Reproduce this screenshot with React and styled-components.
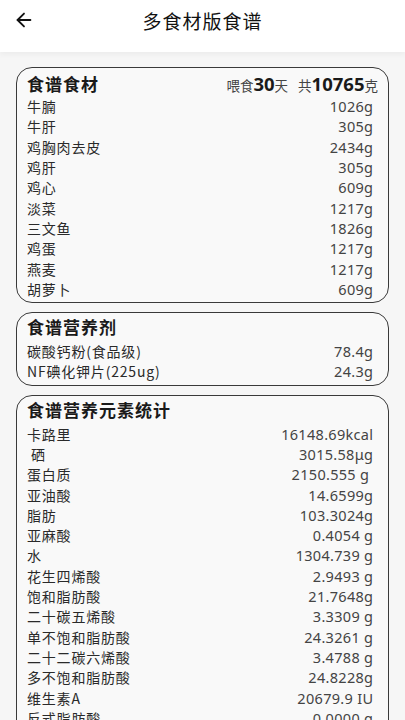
import React from 'react'
import styled, { createGlobalStyle } from 'styled-components'
import { ArrowLeft } from 'lucide-react'

const GlobalStyle = createGlobalStyle`
  html, body {
    margin: 0;
    padding: 0;
    background: #f6f6f6;
    font-family: "Noto Sans CJK SC", "Noto Sans", "Liberation Sans", sans-serif;
  }
`

const ingredients = [
  ['牛腩', '1026g'],
  ['牛肝', '305g'],
  ['鸡胸肉去皮', '2434g'],
  ['鸡肝', '305g'],
  ['鸡心', '609g'],
  ['淡菜', '1217g'],
  ['三文鱼', '1826g'],
  ['鸡蛋', '1217g'],
  ['燕麦', '1217g'],
  ['胡萝卜', '609g'],
]

const supplements = [
  ['碳酸钙粉(食品级)', '78.4g'],
  ['NF碘化钾片(225ug)', '24.3g'],
]

const nutrients = [
  ['卡路里', '16148.69kcal'],
  [' 硒', '3015.58μg'],
  ['蛋白质', '2150.555 g '],
  ['亚油酸', '14.6599g'],
  ['脂肪', '103.3024g'],
  ['亚麻酸', '0.4054 g'],
  ['水', '1304.739 g'],
  ['花生四烯酸', '2.9493 g'],
  ['饱和脂肪酸', '21.7648g'],
  ['二十碳五烯酸', '3.3309 g'],
  ['单不饱和脂肪酸', '24.3261 g'],
  ['二十二碳六烯酸', '3.4788 g'],
  ['多不饱和脂肪酸', '24.8228g'],
  ['维生素A', '20679.9 IU'],
  ['反式脂肪酸', '0.0000 g'],
  ['胆固醇', '7421.35mg'],
  ['碳水化合物', '1207.84g'],
]

export default function App() {
  return (
    <>
      <GlobalStyle />
      <Page>
        <TopBar>
          <BackButton><ArrowLeft size={22} strokeWidth={2} /></BackButton>
          <PageTitle>多食材版食谱</PageTitle>
        </TopBar>
        <Content>
          <Card>
            <CardHead $tall>
              <CardTitle>食谱食材</CardTitle>
              <Summary>
                <Small>喂食</Small><Big>30</Big><Small>天</Small>
                <Spacer />
                <Small>共</Small><Big>10765</Big><Small>克</Small>
              </Summary>
            </CardHead>
            {ingredients.map(([name, val]) => (
              <Row key={name}><Name>{name}</Name><Value>{val}</Value></Row>
            ))}
          </Card>

          <Card>
            <CardHead>
              <CardTitle>食谱营养剂</CardTitle>
            </CardHead>
            {supplements.map(([name, val]) => (
              <Row key={name}><Name>{name}</Name><Value>{val}</Value></Row>
            ))}
          </Card>

          <Card>
            <CardHead>
              <CardTitle>食谱营养元素统计</CardTitle>
            </CardHead>
            {nutrients.map(([name, val]) => (
              <Row key={name}><Name>{name}</Name><Value>{val}</Value></Row>
            ))}
          </Card>
        </Content>
      </Page>
    </>
  )
}

let Page = styled.div`
  width: 405px;
  min-height: 720px;
  background: #f6f6f6;
`

let TopBar = styled.header`
  position: relative;
  height: 52px;
  background: #fff;
  display: flex;
  align-items: center;
  justify-content: center;
  box-shadow: 0 3px 5px rgba(0, 0, 0, 0.04);
`

let BackButton = styled.div`
  position: absolute;
  left: 13px;
  top: 9px;
  color: #111;
  display: flex;
`

let PageTitle = styled.h1`
  margin: 0;
  margin-top: -12px;
  font-size: 19px;
  font-weight: 400;
  color: #111;
  letter-spacing: 1px;
`

let Content = styled.main`
  padding: 15px 16px 0;
  display: flex;
  flex-direction: column;
  gap: 9px;
`

let Card = styled.section`
  background: #f9f9f9;
  border: 1.5px solid #3a3a3a;
  border-radius: 16px;
  padding: 2px 15px 3.5px 10px;
`

let CardHead = styled.div`
  display: flex;
  align-items: center;
  justify-content: space-between;
  height: ${p => (p.$tall ? '26px' : '22px')};
  margin-bottom: ${p => (p.$tall ? '0' : '3.5px')};
`

let CardTitle = styled.h2`
  margin: 0;
  font-size: 17px;
  letter-spacing: 1px;
  font-weight: 700;
  color: #1a1a1a;
`

let Summary = styled.div`
  display: flex;
  align-items: baseline;
  margin-right: -5px;
  color: #444;
`

let Small = styled.span`
  font-size: 13.5px;
`

let Big = styled.span`
  font-size: 18.5px;
  font-weight: 700;
  font-family: "Noto Sans", "Liberation Sans", sans-serif;
  color: #1a1a1a;
`

let Spacer = styled.span`
  width: 10px;
`

let Row = styled.div`
  display: flex;
  justify-content: space-between;
  align-items: center;
  height: 20.3px;
  font-size: 14px;
  letter-spacing: 0.8px;
  color: #2a2a2a;
`

let Name = styled.span`
  white-space: pre;
`

let Value = styled.span`
  white-space: pre;
  color: #444;
  letter-spacing: 0.3px;
  font-size: 14.5px;
  margin-right: -0.3px;
  font-family: "Noto Sans", "Liberation Sans", sans-serif;
`
